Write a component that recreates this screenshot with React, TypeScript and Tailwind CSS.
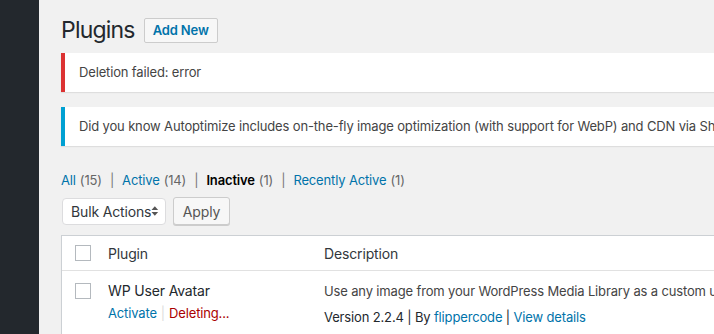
import React from "react";

export default function App() {
  const font = { fontFamily: "Inter, 'Noto Sans', 'Liberation Sans', sans-serif" };
  return (
    <div className="flex w-[714px] h-[334px] overflow-hidden bg-[#f1f1f1] text-[13px] text-[#444] tracking-[-0.15px]" style={font}>
      <div className="w-[39px] shrink-0 bg-[#23282d]" />
      <div className="flex-1 min-w-0 pl-[22px] pt-[17px] whitespace-nowrap">
        <div className="flex items-center h-[27px]">
          <h1 className="text-[23px] leading-[27px] text-[#23282d] font-normal tracking-[-0.8px]">Plugins</h1>
          <button className="ml-[9px] h-[25px] px-[8px] border border-[#ccc] bg-[#f7f7f7] rounded-[2px] text-[#0073aa] font-semibold text-[13px] leading-[23px] mt-[-1px]">
            Add New
          </button>
        </div>
        <div className="mt-[9px] w-[700px] h-[39px] bg-white border-l-4 border-[#dc3232] shadow-[0_1px_1px_rgba(0,0,0,0.08)] flex items-center pl-[14px] text-[#444]">
          Deletion failed: error
        </div>
        <div className="mt-[15px] w-[700px] h-[39px] bg-white border-l-4 border-[#00a0d2] shadow-[0_1px_1px_rgba(0,0,0,0.08)] flex items-center pl-[14px] text-[#444]">
          Did you know Autoptimize includes on-the-fly image optimization (with support for WebP) and CDN via ShortPixel?
        </div>
        <div className="mt-[26px] flex items-center h-[18px] text-[13px]">
          <span className="text-[#0073aa]">All</span>
          <span className="ml-[4px] text-[#666]">(15)</span>
          <span className="mx-[8px] text-[#777]">|</span>
          <span className="text-[#0073aa]">Active</span>
          <span className="ml-[4px] text-[#666]">(14)</span>
          <span className="mx-[8px] text-[#777]">|</span>
          <span className="text-[#000] font-semibold">Inactive</span>
          <span className="ml-[4px] text-[#666]">(1)</span>
          <span className="mx-[8px] text-[#777]">|</span>
          <span className="text-[#0073aa]">Recently Active</span>
          <span className="ml-[4px] text-[#666]">(1)</span>
        </div>
        <div className="mt-[7px] flex items-center gap-[7px]">
          <div className="ml-[1px] w-[104px] h-[27px] bg-white border border-[#dcdcde] rounded-[4px] flex items-center justify-between pl-[8px] pr-[6px] text-[14px] text-[#32373c]">
            <span>Bulk Actions</span>
            <svg width="8" height="12" viewBox="0 0 8 12">
              <path d="M4 1 L7.5 5 H0.5 Z" fill="#555" />
              <path d="M4 11 L7.5 7 H0.5 Z" fill="#555" />
            </svg>
          </div>
          <button className="w-[57px] h-[28px] bg-[#f7f7f7] border border-[#ccc] rounded-[3px] shadow-[0_1px_0_#ccc] text-[14px] text-[#555]">
            Apply
          </button>
        </div>
        <div className="mt-[10px] w-[700px] bg-white border border-[#ccd0d4] shadow-[0_1px_1px_rgba(0,0,0,0.04)]">
          <div className="flex items-center h-[35px] border-b border-[#e1e1e1] text-[14px] text-[#32373c]">
            <div className="w-[46px] shrink-0 pl-[13px]">
              <div className="w-[16px] h-[16px] border border-[#b4b9be] bg-white" />
            </div>
            <div className="w-[216px] shrink-0">Plugin</div>
            <div>Description</div>
          </div>
          <div className="flex pt-[11px] h-[70px]">
            <div className="w-[46px] shrink-0 pl-[13px] pt-[1px]">
              <div className="w-[16px] h-[16px] border border-[#b4b9be] bg-white" />
            </div>
            <div className="w-[216px] shrink-0">
              <div className="text-[14px] leading-[18px] text-[#23282d]">WP User Avatar</div>
              <div className="mt-[4px] text-[13px] leading-[18px]">
                <span className="text-[#0073aa]">Activate</span>
                <span className="mx-[4px] text-[#ddd]">|</span>
                <span className="text-[#a00]">Deleting...</span>
              </div>
            </div>
            <div className="text-[13px]">
              <div className="leading-[18px] text-[#444]">Use any image from your WordPress Media Library as a custom user avatar.</div>
              <div className="mt-[8px] leading-[18px] text-[#23282d]">
                Version 2.2.4 | By <span className="text-[#0073aa]">flippercode</span> | <span className="text-[#0073aa]">View details</span>
              </div>
            </div>
          </div>
        </div>
      </div>
    </div>
  );
}
